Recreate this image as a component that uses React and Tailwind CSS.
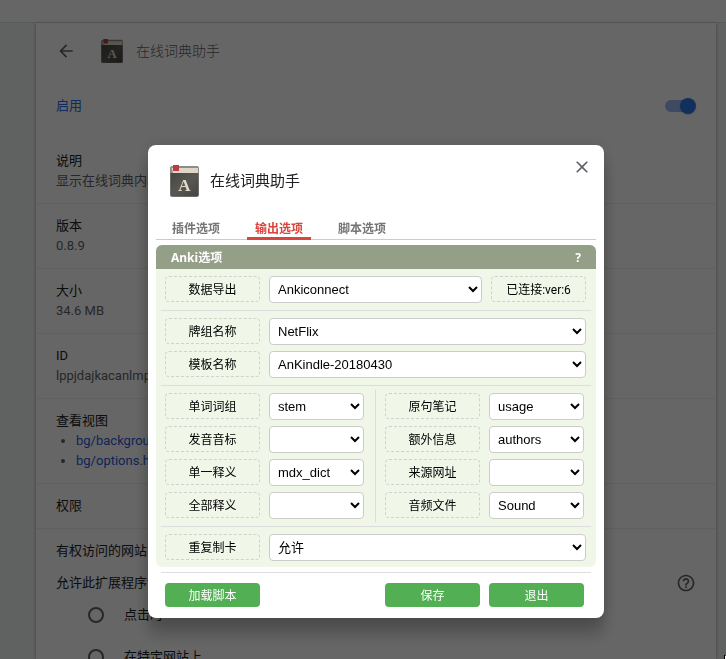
import React from "react";

const ROW = "flex gap-[9px]";
const SELECT =
  "h-[27px] min-w-0 flex-1 rounded border border-[#ccc] bg-white pl-1 pr-0.5 font-['Liberation_Sans','Noto_Sans_CJK_SC',sans-serif] text-[13px] text-black";
const DASHED =
  "flex h-[26px] w-[95px] shrink-0 items-center justify-center rounded border border-dashed border-[#d0d2cc] pt-px text-[12px] leading-4 text-black";
const BUTTON =
  "h-6 w-[95px] rounded bg-[#52af54] pt-px text-[12px] leading-5 text-white";

function BookIcon({ className }) {
  return (
    <svg className={className} viewBox="0 0 29 32" aria-hidden="true">
      <defs>
        <linearGradient id="cover" x1="0" y1="0" x2="1" y2="1">
          <stop offset="0" stopColor="#464541" />
          <stop offset="0.5" stopColor="#595752" />
          <stop offset="1" stopColor="#454440" />
        </linearGradient>
      </defs>
      <rect x="0" y="1" width="29" height="31" rx="2" fill="#8e8c88" />
      <path d="M0.5 8h28v21.5a2 2 0 0 1-2 2h-24a2 2 0 0 1-2-2z" fill="url(#cover)" />
      <path d="M1.5 3h26.5v5H3z" fill="#dfd6c6" />
      <path d="M3 0h6v6H3z" fill="#bd3b47" />
      <text
        x="14.5"
        y="25.5"
        textAnchor="middle"
        fontFamily="Liberation Serif, serif"
        fontWeight="bold"
        fontSize="17"
        fill="#e2dac9"
      >
        A
      </text>
    </svg>
  );
}

function HelpIcon({ className }) {
  return (
    <svg className={className} viewBox="0 0 24 24" fill="currentColor" aria-hidden="true">
      <path d="M11 18h2v-2h-2v2zm1-16C6.48 2 2 6.48 2 12s4.48 10 10 10 10-4.48 10-10S17.52 2 12 2zm0 18c-4.41 0-8-3.59-8-8s3.59-8 8-8 8 3.59 8 8-3.59 8-8 8zm0-14c-2.21 0-4 1.79-4 4h2c0-1.1.9-2 2-2s2 .9 2 2c0 2-3 1.75-3 5h2c0-2.25 3-2.5 3-5 0-2.21-1.79-4-4-4z" />
    </svg>
  );
}

function Detail({ title, children }) {
  return (
    <section className="border-b border-black/6 px-5 py-3 leading-5">
      <h2 className="text-[#202124]">{title}</h2>
      {children}
    </section>
  );
}

function ExtensionPage() {
  return (
    <div className="flex h-screen flex-col overflow-hidden bg-[#f1f6f4] font-[Roboto,'Noto_Sans_CJK_SC',sans-serif] text-[13px] font-light text-[#5f6368]">
      <header className="h-[23px] shrink-0 border-b border-black/12 bg-white" />
      <main className="min-h-0 flex-1 pl-9 pr-[10px]">
        <div className="h-full overflow-hidden bg-white font-normal shadow-[0_1px_2px_rgba(60,64,67,0.3),0_1px_3px_1px_rgba(60,64,67,0.15)]">
          <div className="flex h-14 items-center pl-5">
            <button type="button" aria-label="返回">
              <svg className="size-5" viewBox="0 0 24 24" fill="currentColor">
                <path d="M20 11H7.83l5.59-5.59L12 4l-8 8 8 8 1.41-1.41L7.83 13H20v-2z" />
              </svg>
            </button>
            <BookIcon className="ml-[25px] h-6 w-[22px]" />
            <h1 className="ml-[13px] text-[14px] font-light">在线词典助手</h1>
          </div>
          <div className="flex h-[60px] items-center justify-between px-5 pb-1.5">
            <label htmlFor="enabled" className="text-[#2a6be8]">启用</label>
            <span className="relative flex h-4 w-[31px] items-center">
              <input
                id="enabled"
                type="checkbox"
                defaultChecked
                className="h-3 w-7 appearance-none rounded-full bg-[#98b8f0]"
              />
              <span className="pointer-events-none absolute right-0 size-4 rounded-full bg-[#2f75ea] shadow" />
            </span>
          </div>
          <Detail title="说明">
            <p>显示在线词典内容</p>
          </Detail>
          <Detail title="版本">
            <p>0.8.9</p>
          </Detail>
          <Detail title="大小">
            <p>34.6 MB</p>
          </Detail>
          <Detail title="ID">
            <p>lppjdajkacanlmpb</p>
          </Detail>
          <Detail title="查看视图">
            <ul className="list-disc pl-5">
              <li><a href="#background" className="text-[#2a5bd8]">bg/background.html</a></li>
              <li><a href="#options" className="text-[#2a5bd8]">bg/options.html</a></li>
            </ul>
          </Detail>
          <Detail title="权限" />
          <section className="px-5 pt-3 leading-5 text-[#202124]">
            <h2>有权访问的网站</h2>
            <div className="mb-px mt-3 flex items-center justify-between">
              <p>允许此扩展程序读取</p>
              <button type="button" aria-label="帮助" className="text-[#5f6368]">
                <HelpIcon className="size-5" />
              </button>
            </div>
            {["点击时", "在特定网站上"].map((text) => (
              <label key={text} className="flex h-[42px] items-center gap-5 pl-8">
                <input
                  type="radio"
                  name="access"
                  className="size-4 appearance-none rounded-full border-2 border-[#5f6368]"
                />
                {text}
              </label>
            ))}
          </section>
        </div>
      </main>
    </div>
  );
}

function Field({ id, label, value }) {
  return (
    <div className={ROW}>
      <label htmlFor={id} className={DASHED}>{label}</label>
      <select id={id} className={SELECT} defaultValue={value}>
        <option value={value}>{value}</option>
      </select>
    </div>
  );
}

function Tab({ active, children }) {
  return (
    <button
      type="button"
      role="tab"
      aria-selected={active}
      className={
        active
          ? "h-6 w-16 border-b-[3px] border-[#d9453d] pt-1 font-bold leading-4 text-[#d9453d]"
          : "h-6 w-16 border-b-[3px] border-transparent pt-1 font-bold leading-4 text-[#757575]"
      }
    >
      {children}
    </button>
  );
}

function OptionsDialog() {
  return (
    <div
      role="dialog"
      aria-label="在线词典助手"
      className="w-full max-w-[456px] self-start rounded-lg bg-white px-2 pb-[11px] font-['Noto_Sans','Noto_Sans_CJK_SC',sans-serif] text-[12px] shadow-[0_0_16px_rgba(0,0,0,0.12),0_16px_16px_rgba(0,0,0,0.24)]"
    >
      <div className="flex h-[71px] items-start pl-[14px] pr-1">
        <BookIcon className="mt-5 h-8 w-[29px]" />
        <h1 className="ml-[11px] mt-[23px] flex-1 text-[15px] leading-6 text-[#202124]">在线词典助手</h1>
        <button type="button" aria-label="关闭" className="mt-3 text-[#5f6368]">
          <svg className="size-5" viewBox="0 0 24 24" fill="currentColor">
            <path d="M19 6.41L17.59 5 12 10.59 6.41 5 5 6.41 10.59 12 5 17.59 6.41 19 12 13.41 17.59 19 19 17.59 13.41 12z" />
          </svg>
        </button>
      </div>
      <div className="border-b border-[#ccc]">
        <div role="tablist" className="-mb-px flex gap-[19px] pl-2">
          <Tab>插件选项</Tab>
          <Tab active>输出选项</Tab>
          <Tab>脚本选项</Tab>
        </div>
      </div>

      <div className="mt-[5px] overflow-hidden rounded-md bg-[#f0f6e8]">
        <div className="flex h-6 items-center justify-between bg-[#939f86] px-[15px] pt-px font-bold text-white">
          <h2>Anki选项</h2>
          <button type="button" aria-label="帮助">?</button>
        </div>
        <div className="px-[5px]">
          <div className={ROW + " border-b border-[#ddd] py-[7px] pl-1 pr-[5px]"}>
            <label htmlFor="services" className={DASHED}>数据导出</label>
            <select id="services" className={SELECT} defaultValue="Ankiconnect">
              <option>Ankiconnect</option>
            </select>
            <output htmlFor="services" className={DASHED + " font-[Roboto,'Noto_Sans_CJK_SC',sans-serif]"}>
              已连接:ver:6
            </output>
          </div>
          <div className="flex flex-col gap-1.5 border-b border-[#ddd] py-[7px] pl-1 pr-[5px]">
            <Field id="deck" label="牌组名称" value="NetFlix" />
            <Field id="type" label="模板名称" value="AnKindle-20180430" />
          </div>
          <div className="grid grid-cols-2 border-b border-[#ddd] py-1">
            <div className="flex flex-col gap-1.5 border-r border-[#ddd] py-[3px] pl-1 pr-[11px]">
              <Field id="expression" label="单词词组" value="stem" />
              <Field id="reading" label="发音音标" value="" />
              <Field id="definition" label="单一释义" value="mdx_dict" />
              <Field id="definitions" label="全部释义" value="" />
            </div>
            <div className="flex flex-col gap-1.5 py-[3px] pl-[9px] pr-[7px]">
              <Field id="sentence" label="原句笔记" value="usage" />
              <Field id="extra" label="额外信息" value="authors" />
              <Field id="url" label="来源网址" value="" />
              <Field id="audio" label="音频文件" value="Sound" />
            </div>
          </div>
          <div className="pb-1.5 pl-1 pr-[5px] pt-[7px]">
            <Field id="duplicate" label="重复制卡" value="允许" />
          </div>
        </div>
      </div>

      <div className="mx-[5px] mt-[5px] flex gap-[9px] border-t border-[#ddd] pl-1 pr-[7px] pt-[10px]">
        <button type="button" className={BUTTON + " mr-auto"}>加载脚本</button>
        <button type="button" className={BUTTON}>保存</button>
        <button type="button" className={BUTTON}>退出</button>
      </div>
    </div>
  );
}

export default function App() {
  return (
    <>
      <ExtensionPage />
      <div className="fixed inset-0 flex justify-center bg-black/60 pl-9 pr-[10px] pt-[145px]">
        <OptionsDialog />
      </div>
      <svg className="fixed bottom-0 right-0 h-1 w-0.5" viewBox="0 0 2 4" aria-hidden="true">
        <path d="M0 0h1v4H0z" />
        <path d="M1 1h1v3H1z" fill="#fff" />
      </svg>
    </>
  );
}
